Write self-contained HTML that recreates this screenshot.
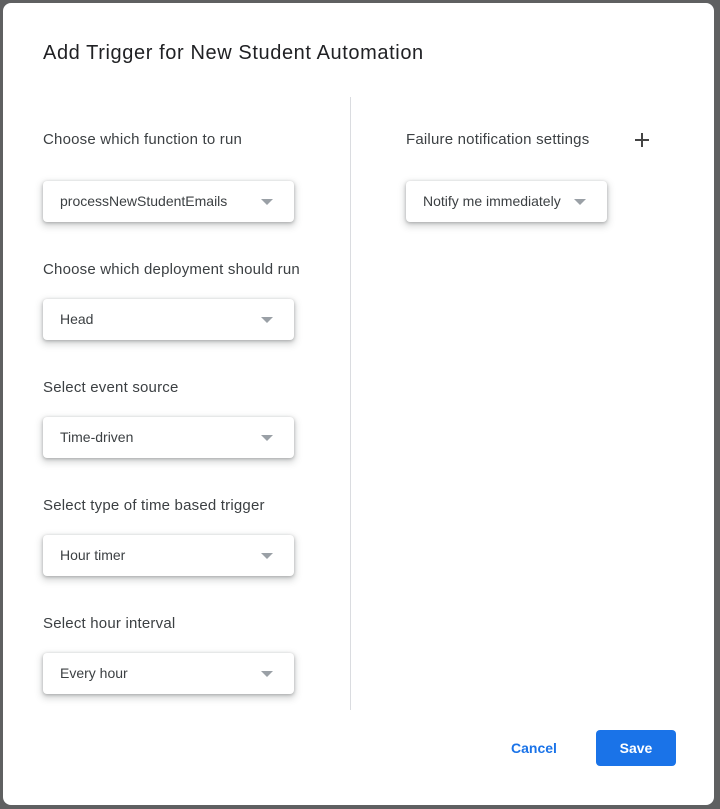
<!DOCTYPE html>
<html><head><style>
*{margin:0;padding:0;box-sizing:border-box}
body{width:720px;height:809px;background:#5f6061;position:relative;overflow:hidden;font-family:"Liberation Sans",Arial,sans-serif}
.dlg{position:absolute;left:3px;top:3px;width:711px;height:802px;background:#fff;border-radius:8px}
.t{position:absolute;left:43px;top:42px;font-size:20px;letter-spacing:0.6px;color:#202124}
.l{position:absolute;font-size:15px;letter-spacing:0.2px;color:#3c4043}
.dd{position:absolute;height:41px;background:#fff;border-radius:4px;box-shadow:0 1px 3px rgba(60,64,67,.35),0 3px 7px 2px rgba(60,64,67,.18);font-size:14px;color:#3c4043;padding:12px 0 0 17px}
.dd:after{content:"";position:absolute;right:21px;top:18px;border-left:6px solid transparent;border-right:6px solid transparent;border-top:6px solid #9aa0a6}
.div{position:absolute;left:350px;top:97px;width:1px;height:613px;background:#dadce0}
</style></head><body>
<div class="dlg"></div>
<div class="t">Add Trigger for New Student Automation</div>
<div class="div"></div>
<div class="l" style="left:43px;top:131px">Choose which function to run</div>
<div class="dd" style="left:43px;top:181px;width:251px">processNewStudentEmails</div>
<div class="l" style="left:43px;top:261px">Choose which deployment should run</div>
<div class="dd" style="left:43px;top:299px;width:251px">Head</div>
<div class="l" style="left:43px;top:379px">Select event source</div>
<div class="dd" style="left:43px;top:417px;width:251px">Time-driven</div>
<div class="l" style="left:43px;top:497px">Select type of time based trigger</div>
<div class="dd" style="left:43px;top:535px;width:251px">Hour timer</div>
<div class="l" style="left:43px;top:615px">Select hour interval</div>
<div class="dd" style="left:43px;top:653px;width:251px">Every hour</div>
<div class="l" style="left:406px;top:131px">Failure notification settings</div>
<svg style="position:absolute;left:634px;top:132px" width="16" height="16"><path d="M8 1v14M1 8h14" stroke="#444" stroke-width="2"/></svg>
<div class="dd" style="left:406px;top:181px;width:201px">Notify me immediately</div>
<div style="position:absolute;left:511px;top:740px;font-size:14px;color:#1a73e8;font-weight:bold">Cancel</div>
<div style="position:absolute;left:596px;top:730px;width:80px;height:36px;background:#1a73e8;border-radius:4px;color:#fff;font-size:14px;font-weight:bold;text-align:center;line-height:36px">Save</div>
</body></html>
